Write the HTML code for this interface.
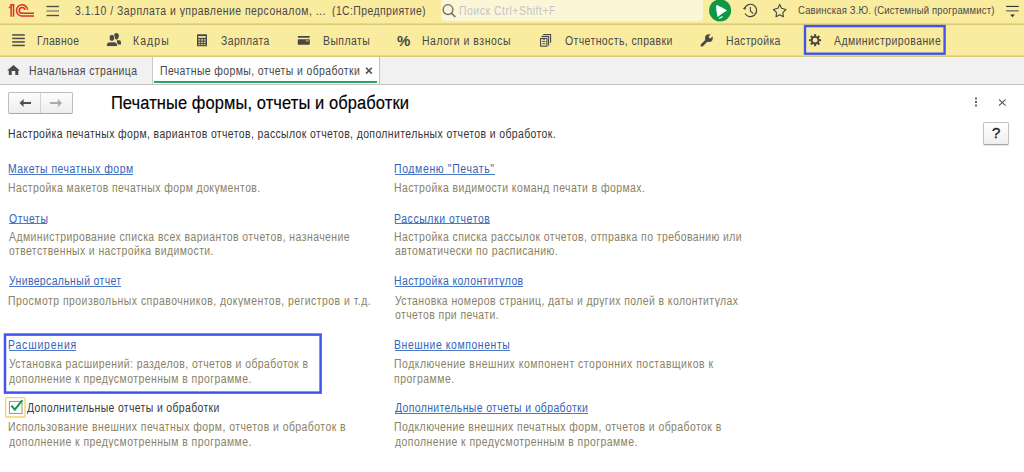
<!DOCTYPE html>
<html><head><meta charset="utf-8">
<style>
*{margin:0;padding:0;box-sizing:border-box}
html,body{width:1024px;height:472px;overflow:hidden;background:#fff;font-family:"Liberation Sans",sans-serif;font-size:11px;color:#333}
.a{position:absolute;white-space:nowrap;line-height:14px}
svg{position:absolute;overflow:visible}
#top{position:absolute;left:0;top:0;width:1024px;height:24px;background:#FAEC9F}
#topline{position:absolute;left:0;top:23px;width:1024px;height:2px;background:linear-gradient(#E8D788 50%,#DAC977 50%)}
#menu{position:absolute;left:0;top:25px;width:1024px;height:31px;background:#FAEC9F}
#menuline{position:absolute;left:0;top:55px;width:1024px;height:2px;background:linear-gradient(#E8D788 50%,#DAC977 50%)}
#tabs{position:absolute;left:0;top:57px;width:1024px;height:27px;background:#F1F1F1}
#tabsline{position:absolute;left:0;top:84px;width:1024px;height:1px;background:#C4C4C4}
.m{color:#404040}
.lnk{}
.d{color:#7F7860}
.title{-webkit-text-stroke:0.15px #000}
.t{position:absolute;white-space:pre;line-height:20px;transform-origin:0 0}
</style></head><body>
<div id="top"></div><div id="topline"></div>
<div id="menu"></div><div id="menuline"></div>
<div id="tabs"></div><div id="tabsline"></div>

<!-- 1C logo -->
<svg width="40" height="24" style="left:0;top:0" viewBox="0 0 40 24">
 <g fill="#DD2A2C">
  <rect x="10.4" y="4.2" width="1.45" height="12.5"/>
  <rect x="12.8" y="4.2" width="1.45" height="12.5"/>
  <rect x="10.4" y="4.2" width="3.85" height="1.4"/>
  <polygon points="8.7,7.3 10.6,5.6 10.6,7.6 9.1,8.6"/>
 </g>
 <g fill="none" stroke="#DD2A2C" stroke-width="1.5">
  <path d="M27.6,9.8 A5.6,5.6 0 1 0 22.2,15.95 L34,15.95"/>
  <path d="M24.9,10 A2.85,2.85 0 1 0 22.2,13.25 L34,13.25"/>
 </g>
</svg>
<!-- hamburger top -->
<svg width="20" height="24" style="left:44px;top:0" viewBox="44 0 20 24">
 <g fill="#505050"><rect x="46.5" y="5.8" width="12.5" height="1.4"/><rect x="46.5" y="10.3" width="12.5" height="1.4" fill="#8A8566"/><rect x="46.5" y="14.8" width="12.5" height="1.4"/></g>
</svg>

<!-- search -->
<div style="position:absolute;left:441px;top:0;width:262px;height:21px;background:#FDF6D6;border-radius:0 0 3px 3px"></div>
<svg width="20" height="24" style="left:440px;top:0" viewBox="440 0 20 24">
 <circle cx="448" cy="9.6" r="4.9" fill="none" stroke="#6A6A6A" stroke-width="1.3"/>
 <line x1="451.5" y1="13.2" x2="455.4" y2="17" stroke="#6A6A6A" stroke-width="1.6"/>
</svg>

<!-- green bell -->
<svg width="26" height="24" style="left:707px;top:0" viewBox="707 0 26 24">
 <circle cx="720.1" cy="10.4" r="11" fill="#0F9746"/>
 <path d="M716.2,5.6 L717.6,4.9 L718.6,5.9 C721,6.6 723.8,8.3 727,10.4 C723.6,12.3 720.6,14.6 717.6,16.9 C717.1,14 716.4,11.5 716.2,9 C716.1,7.6 716.1,6.4 716.2,5.6 Z" fill="#fff"/>
 <path d="M719.2,18.5 L722.5,16.5" stroke="#fff" stroke-width="1.3"/>
</svg>
<!-- history -->
<svg width="20" height="24" style="left:740px;top:0" viewBox="740 0 20 24">
 <path d="M745,13.5 A6.2,6.2 0 1 0 744.6,8.3" fill="none" stroke="#454545" stroke-width="1.2"/>
 <polygon points="742.8,8.4 745.8,6.8 745.4,10" fill="#454545"/>
 <path d="M750.4,7 L750.4,11 L753.2,13.6" fill="none" stroke="#454545" stroke-width="1.1"/>
</svg>
<!-- star -->
<svg width="20" height="24" style="left:770px;top:0" viewBox="770 0 20 24">
 <polygon points="779.7,4.4 781.5,8.3 785.9,9.5 782.8,12.6 783.4,16.7 779.7,14.8 776,16.7 776.6,12.6 773.5,9.5 777.9,8.3" fill="none" stroke="#454545" stroke-width="1.1" stroke-linejoin="round"/>
</svg>
<svg width="20" height="24" style="left:1004px;top:0" viewBox="1004 0 20 24">
 <rect x="1006.1" y="5.9" width="12.7" height="1.1" fill="#333"/>
 <rect x="1006.1" y="10" width="12.7" height="1.6" fill="#8A8566"/>
 <polygon points="1010.1,14.6 1014.9,14.6 1012.5,17.3" fill="#333"/>
</svg>

<!-- menu bar -->
<svg width="20" height="20" style="left:10px;top:30px" viewBox="10 30 20 20">
 <g fill="#4A4A4A"><rect x="12.2" y="34.2" width="12.6" height="1.5"/><rect x="12.2" y="37.7" width="12.6" height="1.5"/><rect x="12.2" y="41.2" width="12.6" height="1.5"/><rect x="12.2" y="44.7" width="12.6" height="1.5"/></g>
</svg>
<svg width="20" height="20" style="left:105px;top:30px" viewBox="105 30 20 20">
 <g fill="#484848">
  <path d="M116.4,32.9 C118.2,32.9 118.9,34.3 118.9,36 C118.9,37.9 117.8,39.4 116.4,39.4 C115,39.4 113.9,37.9 113.9,36 C113.9,34.3 114.6,32.9 116.4,32.9 Z"/>
  <path d="M116.8,40.3 L119.3,40.3 Q121,40.5 121,42.2 L121,44.6 L117.3,44.6 Z"/>
 </g>
 <g fill="#484848" stroke="#FAEC9F" stroke-width="0.9">
  <path d="M111.9,34.5 C113.9,34.5 114.6,36 114.6,37.8 C114.6,39.9 113.4,41.4 111.9,41.4 C110.4,41.4 109.2,39.9 109.2,37.8 C109.2,36 109.9,34.5 111.9,34.5 Z"/>
  <path d="M109,41.9 L114.8,41.9 Q117.4,42.1 117.4,44.6 L117.4,46.6 L106.6,46.6 L106.6,44.6 Q106.6,42.1 109,41.9 Z"/>
 </g>
</svg>
<svg width="16" height="20" style="left:195px;top:32px" viewBox="195 32 16 20">
 <rect x="197" y="34.2" width="10" height="12.1" rx="0.6" fill="#484848"/>
 <rect x="198.3" y="36.1" width="7.4" height="1.8" fill="#F3E6A6"/>
 <g fill="#D8CB8C">
  <rect x="198.4" y="39.1" width="1.8" height="1.5"/><rect x="201.1" y="39.1" width="1.8" height="1.5"/><rect x="203.8" y="39.1" width="1.8" height="1.5"/>
  <rect x="198.4" y="41.6" width="1.8" height="1.5"/><rect x="201.1" y="41.6" width="1.8" height="1.5"/><rect x="203.8" y="41.6" width="1.8" height="1.5"/>
  <rect x="198.4" y="44" width="1.8" height="1.2"/><rect x="201.1" y="44" width="1.8" height="1.2"/><rect x="203.8" y="44" width="1.8" height="1.2"/>
 </g>
</svg>
<svg width="16" height="20" style="left:296px;top:32px" viewBox="296 32 16 20">
 <rect x="297.8" y="36" width="12" height="1.7" rx="0.4" fill="#484848"/>
 <rect x="297.8" y="39.2" width="12" height="5.6" rx="0.5" fill="#484848"/>
 <rect x="305.6" y="40.2" width="3.2" height="1.3" fill="#A9A27C"/>
</svg>
<svg width="16" height="20" style="left:538px;top:32px" viewBox="538 32 16 20">
 <g fill="none" stroke="#4A4A4A" stroke-width="1.1">
  <rect x="540.6" y="38.4" width="6.3" height="7.8"/>
  <path d="M541.6,36.4 L548.6,36.4 L548.6,45.4"/>
  <path d="M543.2,34.5 L550.6,34.5 L550.6,42.8"/>
 </g>
 <g fill="#5A5A50"><rect x="542.2" y="41" width="3.2" height="1"/><rect x="542.2" y="43.2" width="3.2" height="1"/><rect x="542.6" y="39" width="2.4" height="1.2" fill="#8A8266"/></g>
</svg>
<svg width="18" height="20" style="left:698px;top:31px" viewBox="698 31 18 20">
 <line x1="701.9" y1="45.2" x2="707" y2="40.1" stroke="#484848" stroke-width="2.7" stroke-linecap="round"/>
 <circle cx="708.9" cy="38.1" r="3.9" fill="#484848"/>
 <g transform="translate(708.9,38.1) rotate(45)"><rect x="-1.3" y="-6" width="2.6" height="5.4" rx="0.6" fill="#FAEC9F"/></g>
</svg>
<svg width="16" height="16" style="left:807px;top:32px" viewBox="807 32 16 16">
 <g transform="translate(815.1,40.2)">
  <g fill="#484848">
   <rect x="-1" y="-6" width="2" height="12"/>
   <rect x="-1" y="-6" width="2" height="12" transform="rotate(45)"/>
   <rect x="-1" y="-6" width="2" height="12" transform="rotate(90)"/>
   <rect x="-1" y="-6" width="2" height="12" transform="rotate(135)"/>
  </g>
  <circle r="4.3" fill="#484848"/>
  <circle r="2.4" fill="#FAEC9F"/>
 </g>
</svg>
<svg width="150" height="34" style="left:800px;top:22px" viewBox="800 22 150 34">
 <rect x="805" y="26.1" width="139.6" height="27.6" fill="none" stroke="#3F55EE" stroke-width="2.4"/>
</svg>

<div style="position:absolute;left:397px;top:32px;font-size:15px;font-weight:bold;color:#484848;line-height:18px">%</div>
<!-- tabs -->
<svg width="16" height="16" style="left:5px;top:62px" viewBox="5 62 16 16">
 <path d="M13.5,65 L19.9,70.6 L18.3,70.6 L18.3,75.1 L15.3,75.1 L15.3,71.1 L11.7,71.1 L11.7,75.1 L8.8,75.1 L8.8,70.6 L7.1,70.6 Z" fill="#4A4A4A"/>
</svg>
<div style="position:absolute;left:152px;top:57px;width:228px;height:27px;background:#fff;border-left:1px solid #C9C9C9;border-right:1px solid #C2C2C2"></div>
<div style="position:absolute;left:154px;top:81px;width:223px;height:2px;background:#2DA55A"></div>
<svg width="10" height="10" style="left:364px;top:66px" viewBox="364 66 10 10">
 <path d="M366,67.8 L371.8,73.6 M371.8,67.8 L366,73.6" stroke="#505050" stroke-width="1.5"/>
</svg>

<!-- content header -->
<div style="position:absolute;left:8px;top:92px;width:65px;height:22px;border:1px solid #BDBDBD;border-bottom-color:#A8A8A8;border-radius:2px;background:linear-gradient(#FDFDFD,#EDEDED)"></div>
<div style="position:absolute;left:40px;top:93px;width:1px;height:20px;background:#D2D2D2"></div>
<svg width="70" height="24" style="left:8px;top:92px" viewBox="8 92 70 24">
 <path d="M19.5,103 L23.6,99 L23.6,101.9 L31,101.9 L31,104.1 L23.6,104.1 L23.6,107 Z" fill="#505050"/>
 <path d="M62,103 L57.9,99 L57.9,101.9 L50,101.9 L50,104.1 L57.9,104.1 L57.9,107 Z" fill="#ABABAB"/>
</svg>
<svg width="8" height="14" style="left:972px;top:96px" viewBox="972 96 8 14">
 <g fill="#666"><rect x="975" y="97.5" width="2" height="2"/><rect x="975" y="101" width="2" height="2"/><rect x="975" y="104.5" width="2" height="2"/></g>
</svg>
<svg width="12" height="12" style="left:996px;top:96px" viewBox="996 96 12 12">
 <path d="M999,99.3 L1005.6,105.6 M1005.6,99.3 L999,105.6" stroke="#555" stroke-width="1.1"/>
</svg>
<div style="position:absolute;left:983px;top:122px;width:26px;height:23px;border:1px solid #C2C2C2;border-bottom-color:#A6A6A6;border-radius:2px;background:linear-gradient(#FFFFFF,#EEEEEE);box-shadow:0 1px 1px rgba(0,0,0,0.12)"></div>

<div style="position:absolute;left:989px;top:123px;width:14px;text-align:center;font-size:15.5px;line-height:20px;color:#1A1A1A;-webkit-text-stroke:0.3px #1A1A1A">?</div>
<!-- left column -->
<svg width="322" height="64" style="left:2px;top:331px" viewBox="2 331 322 64">
 <rect x="5" y="334.6" width="315.6" height="58" fill="none" stroke="#3F55EE" stroke-width="2.5"/>
</svg>
<svg width="24" height="24" style="left:4px;top:396px" viewBox="4 396 24 24">
 <rect x="5.6" y="397.6" width="19.4" height="19.4" rx="0.8" fill="#fff" stroke="#F7D564" stroke-width="1.4"/>
 <rect x="9.5" y="401.5" width="12.5" height="12" fill="#fff" stroke="#9A9A9A" stroke-width="1.05"/>
 <path d="M11.4,405.6 L14.8,409.6 L22.4,400.2" fill="none" stroke="#14994A" stroke-width="2"/>
</svg>

<!-- right column -->
<div class="t" style="left:74.85px;top:-0.54px;font-size:11px;color:#484848;letter-spacing:0.499px;transform:scale(0.9500,1.1099)">3.1.10 / Зарплата и управление персоналом, ...</div>
<div class="t" style="left:331.95px;top:-0.54px;font-size:11px;color:#484848;letter-spacing:0.418px;transform:scale(0.9500,1.1099)">(1С:Предприятие)</div>
<div class="t" style="left:458.55px;top:-1.14px;font-size:11px;color:#C4C4C8;letter-spacing:0.548px;transform:scale(0.9500,1.1099)">Поиск Ctrl+Shift+F</div>
<div class="t" style="left:797.80px;top:0.10px;font-size:10px;color:#484848;letter-spacing:0.186px;transform:scale(0.9500,1.0465)">Савинская З.Ю. (Системный программист)</div>
<div class="t" style="left:37.05px;top:29.16px;font-size:11px;color:#484848;letter-spacing:0.377px;transform:scale(0.9500,1.1099)">Главное</div>
<div class="t" style="left:132.85px;top:29.16px;font-size:11px;color:#484848;letter-spacing:1.145px;transform:scale(0.9500,1.1099)">Кадры</div>
<div class="t" style="left:220.65px;top:29.16px;font-size:11px;color:#484848;letter-spacing:0.398px;transform:scale(0.9500,1.1099)">Зарплата</div>
<div class="t" style="left:322.65px;top:29.16px;font-size:11px;color:#484848;letter-spacing:0.465px;transform:scale(0.9500,1.1099)">Выплаты</div>
<div class="t" style="left:422.45px;top:29.16px;font-size:11px;color:#484848;letter-spacing:0.549px;transform:scale(0.9500,1.1099)">Налоги и взносы</div>
<div class="t" style="left:564.60px;top:29.16px;font-size:11px;color:#484848;letter-spacing:0.436px;transform:scale(0.9500,1.1099)">Отчетность, справки</div>
<div class="t" style="left:725.95px;top:29.26px;font-size:11px;color:#484848;letter-spacing:0.388px;transform:scale(0.9500,1.1099)">Настройка</div>
<div class="t" style="left:834.30px;top:29.16px;font-size:11px;color:#484848;letter-spacing:0.464px;transform:scale(0.9500,1.1099)">Администрирование</div>
<div class="t" style="left:28.75px;top:59.26px;font-size:11px;color:#484848;letter-spacing:0.430px;transform:scale(0.9500,1.1099)">Начальная страница</div>
<div class="t" style="left:159.55px;top:59.26px;font-size:11px;color:#484848;letter-spacing:0.410px;transform:scale(0.9500,1.1099)">Печатные формы, отчеты и обработки</div>
<div class="t title" style="left:110.90px;top:92.29px;font-size:16.5px;color:#000;letter-spacing:0.088px;transform:scale(1.0000,1.0571)">Печатные формы, отчеты и обработки</div>
<div class="t" style="left:7.85px;top:122.46px;font-size:11px;color:#333;letter-spacing:0.408px;transform:scale(0.9500,1.1099)">Настройка печатных форм, вариантов отчетов, рассылок отчетов, дополнительных отчетов и обработок.</div>
<div class="t lnk" style="left:7.95px;top:157.26px;font-size:11px;color:#3563B8;letter-spacing:0.521px;transform:scale(0.9500,1.1099)">Макеты печатных форм</div>
<div style="position:absolute;left:8.60px;top:174px;width:124.20px;height:1px;background:#4C78C8"></div>
<div class="t" style="left:7.55px;top:176.36px;font-size:11px;color:#898265;letter-spacing:0.445px;transform:scale(0.9500,1.1099)">Настройка макетов печатных форм документов.</div>
<div class="t lnk" style="left:8.90px;top:206.56px;font-size:11px;color:#3563B8;letter-spacing:0.600px;transform:scale(0.9500,1.1099)">Отчеты</div>
<div style="position:absolute;left:8.60px;top:223px;width:38.80px;height:1px;background:#4C78C8"></div>
<div class="t" style="left:8.50px;top:225.26px;font-size:11px;color:#898265;letter-spacing:0.461px;transform:scale(0.9500,1.1099)">Администрирование списка всех вариантов отчетов, назначение</div>
<div class="t" style="left:8.50px;top:239.36px;font-size:11px;color:#898265;letter-spacing:0.412px;transform:scale(0.9500,1.1099)">ответственных и настройка видимости.</div>
<div class="t lnk" style="left:8.90px;top:269.26px;font-size:11px;color:#3563B8;letter-spacing:0.389px;transform:scale(0.9500,1.1099)">Универсальный отчет</div>
<div style="position:absolute;left:8.60px;top:286px;width:112.90px;height:1px;background:#4C78C8"></div>
<div class="t" style="left:7.55px;top:289.06px;font-size:11px;color:#898265;letter-spacing:0.497px;transform:scale(0.9500,1.1099)">Просмотр произвольных справочников, документов, регистров и т.д.</div>
<div class="t lnk" style="left:7.95px;top:332.76px;font-size:11px;color:#3563B8;letter-spacing:0.877px;transform:scale(0.9500,1.1099)">Расширения</div>
<div style="position:absolute;left:8.60px;top:350px;width:67.20px;height:1px;background:#4C78C8"></div>
<div class="t" style="left:8.50px;top:352.46px;font-size:11px;color:#898265;letter-spacing:0.450px;transform:scale(0.9500,1.1099)">Установка расширений: разделов, отчетов и обработок в</div>
<div class="t" style="left:8.50px;top:366.56px;font-size:11px;color:#898265;letter-spacing:0.466px;transform:scale(0.9500,1.1099)">дополнение к предусмотренным в программе.</div>
<div class="t" style="left:27.10px;top:396.46px;font-size:11px;color:#3A3A3A;letter-spacing:0.372px;transform:scale(0.9500,1.1099)">Дополнительные отчеты и обработки</div>
<div class="t" style="left:7.55px;top:415.26px;font-size:11px;color:#898265;letter-spacing:0.477px;transform:scale(0.9500,1.1099)">Использование внешних печатных форм, отчетов и обработок в</div>
<div class="t" style="left:8.50px;top:429.66px;font-size:11px;color:#898265;letter-spacing:0.466px;transform:scale(0.9500,1.1099)">дополнение к предусмотренным в программе.</div>
<div class="t lnk" style="left:394.25px;top:157.26px;font-size:11px;color:#3563B8;letter-spacing:0.674px;transform:scale(0.9500,1.1099)">Подменю &quot;Печать&quot;</div>
<div style="position:absolute;left:394.90px;top:174px;width:99.70px;height:1px;background:#4C78C8"></div>
<div class="t" style="left:394.25px;top:176.36px;font-size:11px;color:#898265;letter-spacing:0.444px;transform:scale(0.9500,1.1099)">Настройка видимости команд печати в формах.</div>
<div class="t lnk" style="left:394.25px;top:206.56px;font-size:11px;color:#3563B8;letter-spacing:0.611px;transform:scale(0.9500,1.1099)">Рассылки отчетов</div>
<div style="position:absolute;left:394.90px;top:223px;width:95.00px;height:1px;background:#4C78C8"></div>
<div class="t" style="left:394.25px;top:225.26px;font-size:11px;color:#898265;letter-spacing:0.440px;transform:scale(0.9500,1.1099)">Настройка списка рассылок отчетов, отправка по требованию или</div>
<div class="t" style="left:395.20px;top:239.36px;font-size:11px;color:#898265;letter-spacing:0.462px;transform:scale(0.9500,1.1099)">автоматически по расписанию.</div>
<div class="t lnk" style="left:394.25px;top:269.26px;font-size:11px;color:#3563B8;letter-spacing:0.434px;transform:scale(0.9500,1.1099)">Настройка колонтитулов</div>
<div style="position:absolute;left:394.90px;top:286px;width:128.20px;height:1px;background:#4C78C8"></div>
<div class="t" style="left:395.20px;top:289.06px;font-size:11px;color:#898265;letter-spacing:0.431px;transform:scale(0.9500,1.1099)">Установка номеров страниц, даты и других полей в колонтитулах</div>
<div class="t" style="left:395.20px;top:303.06px;font-size:11px;color:#898265;letter-spacing:0.439px;transform:scale(0.9500,1.1099)">отчетов при печати.</div>
<div class="t lnk" style="left:394.25px;top:332.76px;font-size:11px;color:#3563B8;letter-spacing:0.601px;transform:scale(0.9500,1.1099)">Внешние компоненты</div>
<div style="position:absolute;left:394.90px;top:350px;width:115.00px;height:1px;background:#4C78C8"></div>
<div class="t" style="left:394.25px;top:352.46px;font-size:11px;color:#898265;letter-spacing:0.544px;transform:scale(0.9500,1.1099)">Подключение внешних компонент сторонних поставщиков к</div>
<div class="t" style="left:394.25px;top:366.56px;font-size:11px;color:#898265;letter-spacing:0.500px;transform:scale(0.9500,1.1099)">программе.</div>
<div class="t lnk" style="left:395.20px;top:396.46px;font-size:11px;color:#3563B8;letter-spacing:0.388px;transform:scale(0.9500,1.1099)">Дополнительные отчеты и обработки</div>
<div style="position:absolute;left:394.90px;top:413px;width:193.10px;height:1px;background:#4C78C8"></div>
<div class="t" style="left:394.25px;top:415.26px;font-size:11px;color:#898265;letter-spacing:0.456px;transform:scale(0.9500,1.1099)">Подключение внешних печатных форм, отчетов и обработок в</div>
<div class="t" style="left:395.20px;top:429.66px;font-size:11px;color:#898265;letter-spacing:0.466px;transform:scale(0.9500,1.1099)">дополнение к предусмотренным в программе.</div>
</body></html>
